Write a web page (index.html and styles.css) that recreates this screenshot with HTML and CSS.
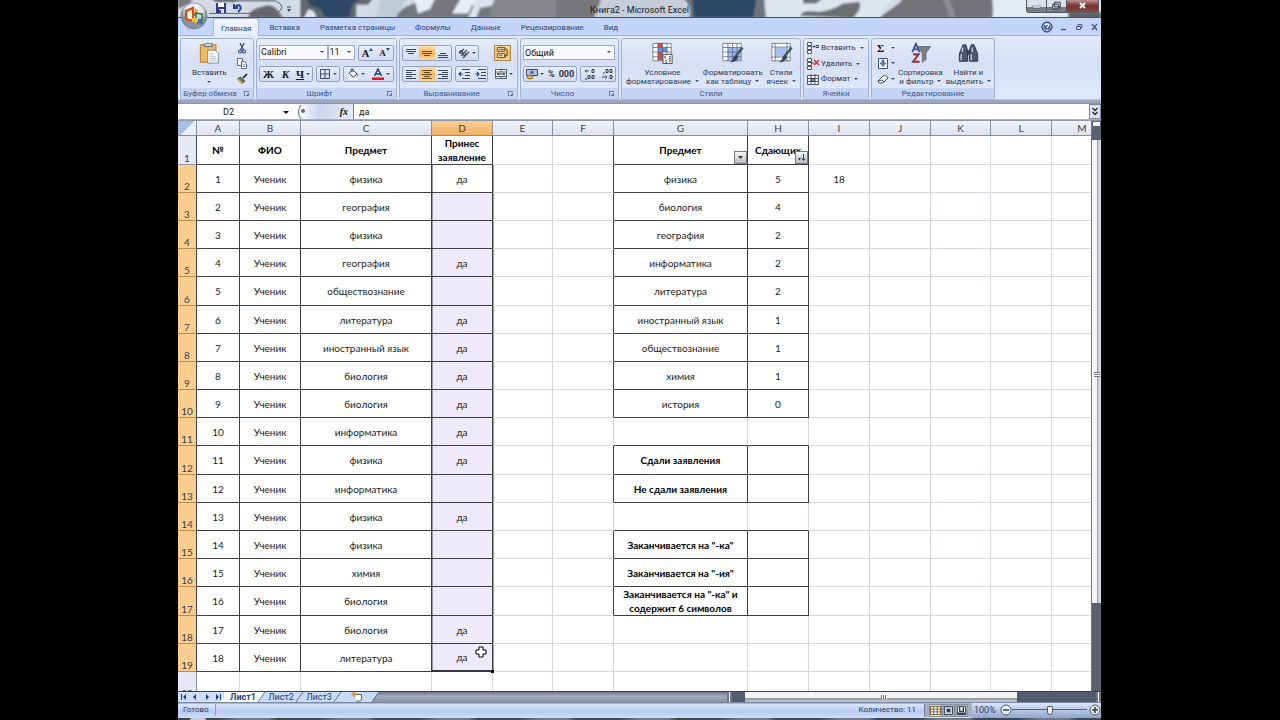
FILE: index.html
```html
<!DOCTYPE html>
<html lang="ru">
<head>
<meta charset="utf-8">
<title>Книга2 - Microsoft Excel</title>
<link rel="stylesheet" href="styles.css">
</head>
<body>
<div class="window">
  <header class="titlebar">
    <svg class="glass" viewBox="0 0 923 19" preserveAspectRatio="none" aria-hidden="true">
      <defs><filter id="soft" x="-5%" y="-30%" width="110%" height="160%"><feGaussianBlur stdDeviation="1.3"/></filter></defs>
      <rect width="923" height="19" fill="#d3dae5"/>
      <g filter="url(#soft)">
        <path d="M0-4h16l-4 8-12 6zM28-4h36l-8 6H40z" fill="#777a80"/>
        <path d="M70 20q2-10 13-12 10-5 17 4l5 8z" fill="#67686a"/>
        <path d="M120-4h22v24h-22z" fill="#dee6f4"/>
        <path d="M122-4h74l-6 9h-12v15h-40q0-9-8-9l-4 9h-4z" fill="#62676d"/>
        <path d="M127-4h58l-10 8-4 16h-24q-2-12-14-13z" fill="#2d4765"/>
        <path d="M203-4h26l-10 24h-22z" fill="#c0cbda"/>
        <path d="M218 20q3-10 14-14l18-10h230v24z" fill="#76777b"/>
        <path d="M236-4h22l-6 14-12 5zM284-4h28l-5 9-13 1-4 9h-16z" fill="#e8ecf4"/>
        <path d="M300-4h28l-12 10-14 3-4 11h-8z" fill="#dce2ed"/>
        <path d="M318-4h60v24h-66q0-12 6-24z" fill="#85878b"/>
        <path d="M416 20l8-24h82l4 24z" fill="#c7ceda"/>
        <path d="M504-4h86v24h-79q4-12-7-24z" fill="#6d737b"/>
        <path d="M514-4h65l-4 24h-59z" fill="#2d4765"/>
        <path d="M586-4h130l-16 24H588z" fill="#dfe5ef"/>
        <path d="M625-4h23l-10 8h-13zM622 18q2-8 19-5 13-1 24-9l16-2q4 7-6 18z" fill="#6c6e72"/>
        <path d="M701 20l20-16 6-8h86q4 12 1 24z" fill="#717377"/>
        <path d="M767-4l8 24" stroke="#8c8e92" stroke-width="6"/>
        <path d="M815-4h108v24H815z" fill="#e5ebf5"/>
        <path d="M890 13h33v8h-33z" fill="#5f6166"/>
      </g>
      <path d="M36 1h62q12 7 0 14H31" fill="none" stroke="#55606e"/>
    </svg>
    <div class="quick">
      <button aria-label="Сохранить"><svg viewBox="0 0 10 10"><path d="M0 0h10v10H0z" fill="#343a86"/><path d="M2 0h6v4H2z" fill="#fff"/><path d="M3 6h5v4H3z" fill="#dfe3f4"/><path d="M3 7h2v3H3z" fill="#343a86"/></svg></button>
      <button aria-label="Отменить"><svg viewBox="0 0 10 10"><path d="M2 1v4h4M2 5q4-4 6-2 2 3-2 6" fill="none" stroke="#26409c" stroke-width="2"/></svg></button>
      <button aria-label="Настройка панели" class="more"><svg viewBox="0 0 10 10"><path d="M3 4h4" stroke="#3b4b66"/><path d="M3 6h4L5 9z" fill="#3b4b66"/></svg></button>
    </div>
    <h1>Книга2 - Microsoft Excel</h1>
    <div class="winbtns">
      <button aria-label="Свернуть"><svg viewBox="0 0 20 12"><path d="M6 6h8v2H6z" fill="#fff" stroke="#4a4e55" stroke-width=".6"/></svg></button>
      <button aria-label="Развернуть"><svg viewBox="0 0 20 12"><path d="M8 2h6v5H8zM6 4h6v5H6z" fill="#d4d8de" stroke="#33373d"/></svg></button>
      <button aria-label="Закрыть" class="close"><svg viewBox="0 0 30 12"><path d="M12.500 3l5 5m0-5l-5 5" stroke="#fff" stroke-width="1.800"/></svg></button>
    </div>
    <button class="office" aria-label="Кнопка Office"><svg viewBox="0 0 28 28"><defs><radialGradient id="orb" cy=".25"><stop offset="0" stop-color="#fff"/><stop offset=".7" stop-color="#dde1ea"/><stop offset="1" stop-color="#8991a2"/></radialGradient></defs><circle cx="14" cy="14" r="13" fill="url(#orb)" stroke="#737c8c" stroke-width=".7"/><path d="M6 9l7-3v13l-7-2z" fill="#fff4df" stroke="#d94b14" stroke-width="2.200"/><path d="M14.500 6.500l3 1v4h-3z" fill="#e9962c"/><path d="M14 11h6v3h-6z" fill="#5a8e37"/><path d="M16 11l6 1v9l-6-1z" fill="#bcd6f0" stroke="#3f7840" stroke-width="1.600"/><path d="M12 16h5v5l-5-1z" fill="#edc13c"/><path d="M18 17h4v4h-4z" fill="#3b71b8"/></svg></button>
  </header>

  <nav class="tabs">
    <button class="tab on">Главная</button>
    <button class="tab">Вставка</button>
    <button class="tab">Разметка страницы</button>
    <button class="tab">Формулы</button>
    <button class="tab">Данные</button>
    <button class="tab">Рецензирование</button>
    <button class="tab">Вид</button>
    <div class="docbtns">
      <button aria-label="Справка"><svg viewBox="0 0 12 12"><circle cx="6" cy="6" r="5" fill="#3f5c9b" stroke="#243b70"/><circle cx="6" cy="6" r="3.800" fill="none" stroke="#dfe8f8" stroke-width=".7"/><path d="M4.300 4.800q.2-1.600 1.800-1.600t1.600 1.400q0 .8-1.600 1.700v.8M6 8v1.200" fill="none" stroke="#fff" stroke-width="1.200"/></svg></button>
      <button aria-label="Свернуть книгу"><svg viewBox="0 0 12 12"><path d="M4 8.500h5" stroke="#46587a" stroke-width="1.400"/></svg></button>
      <button aria-label="Восстановить книгу"><svg viewBox="0 0 12 12"><path d="M3.500 5.500h4v3h-4zM5 5V3.500h4v3H8" fill="none" stroke="#46587a"/></svg></button>
      <button aria-label="Закрыть книгу"><svg viewBox="0 0 12 12"><path d="M3 3l5 6m0-6L3 9" stroke="#46587a" stroke-width="1.300"/></svg></button>
    </div>
  </nav>

  <div class="ribbon">
    <section class="group g-clip">
      <div class="body">
        <button class="big dd">
          <svg viewBox="0 0 24 24"><path d="M2 3h17v19H2z" fill="#efb960" stroke="#a97523"/><path d="M6 4V2h3q1-2 3 0h3v3H6z" fill="#d6d9e0" stroke="#5d6473"/><path d="M10 9h8l4 4v10H10z" fill="#fff" stroke="#7583a3"/><path d="M12 13h5m-5 2.500h8m-8 2.500h8m-8 2.500h8" stroke="#a9b4cc"/></svg>
          <span>Вставить</span></button>
        <div class="stack">
          <button aria-label="Вырезать"><svg viewBox="0 0 12 12"><path d="M4 1l3.500 7M8 1L4.500 8" stroke="#3d4a66" stroke-width="1.300"/><circle cx="4" cy="9.500" r="1.500" fill="none" stroke="#34508f" stroke-width="1.200"/><circle cx="8" cy="9.500" r="1.500" fill="none" stroke="#34508f" stroke-width="1.200"/></svg></button>
          <button aria-label="Копировать"><svg viewBox="0 0 12 12"><path d="M1.500 1.500h5v7h-5z" fill="#fff" stroke="#5b6c92"/><path d="M5.500 4.500h3l2 2v5h-5z" fill="#fff" stroke="#5b6c92"/><path d="M7 7.500h2M7 9.500h2" stroke="#7d93c4"/></svg></button>
          <button aria-label="Формат по образцу"><svg viewBox="0 0 12 12"><path d="M11 1L7 5" stroke="#3d3d3d" stroke-width="2"/><path d="M2 5l3-1 4 4-2 2z" fill="#6a7867" stroke="#3d4438" stroke-width=".6"/><path d="M1 6l5 5 1-1-5-5z" fill="#e7c468" stroke="#876c25" stroke-width=".6"/></svg></button>
        </div>
      </div>
      <h2>Буфер обмена</h2><i class="launch"></i>
    </section>

    <section class="group g-font">
      <div class="body rows">
        <div class="row">
          <div class="combo name"><select aria-label="Шрифт"><option>Calibri</option></select></div>
          <div class="combo size"><select aria-label="Размер шрифта"><option>11</option></select></div>
          <div class="set grow"><button class="serif" aria-label="Увеличить размер">A<svg class="mark" viewBox="0 0 4 4"><path d="M0 3l2-3 2 3z" fill="#27499b"/></svg></button><button class="serif small" aria-label="Уменьшить размер">A<svg class="mark" viewBox="0 0 4 4"><path d="M0 0l2 3 2-3z" fill="#27499b"/></svg></button></div>
        </div>
        <div class="row">
          <div class="set"><button class="serif">Ж</button><button class="serif"><em>К</em></button><button class="serif dd"><u>Ч</u></button></div>
          <div class="set"><button class="dd" aria-label="Границы"><svg viewBox="0 0 12 12"><path d="M1.500 1.500h9v9h-9zM6 1.500v9M1.500 6h9" fill="none" stroke="#434e64"/></svg></button></div>
          <div class="set grow"><button class="dd" aria-label="Цвет заливки"><svg viewBox="0 0 12 12"><path d="M2 5l4-3 4 4-4 3z" fill="#f5f7fb" stroke="#4b5772"/><path d="M4 4V1h2v3" fill="none" stroke="#4b5772"/><path d="M10 5q2 2 .5 4z" fill="#39589a"/><path d="M1 10h10v2H1z" fill="#fff"/></svg></button><button class="dd" aria-label="Цвет текста"><svg viewBox="0 0 12 12"><path d="M2.500 8L6 1l3.500 7M4 6h4" fill="none" stroke="#293e7d" stroke-width="1.500"/><path d="M0 9.500h12V12H0z" fill="#e3161b"/></svg></button></div>
        </div>
      </div>
      <h2>Шрифт</h2><i class="launch"></i>
    </section>

    <section class="group g-align">
      <div class="body rows">
        <div class="row">
          <div class="set three"><button aria-label="По верхнему краю"><svg viewBox="0 0 12 12"><path d="M1 2.500h10M1 4.500h10M3 6.500h6" stroke="#3d485d"/></svg></button><button class="hot" aria-label="По середине"><svg viewBox="0 0 12 12"><path d="M1 4.500h10M1 6.500h10M3 8.500h6" stroke="#6b4a1b"/></svg></button><button aria-label="По нижнему краю"><svg viewBox="0 0 12 12"><path d="M3 6.500h6M1 8.500h10M1 10.500h10" stroke="#3d485d"/></svg></button></div>
          <div class="set two"><button class="dd" aria-label="Ориентация"><svg viewBox="0 0 12 12"><path d="M1 6l5-4M3 9l6-6M5 11l6-6" stroke="#3d485d" stroke-width="1.200"/><circle cx="3" cy="5" r="1.500" fill="none" stroke="#3d485d"/><circle cx="6" cy="7" r="1.500" fill="none" stroke="#3d485d"/></svg></button></div>
          <button class="hot wrapbtn" aria-label="Перенос текста"><svg viewBox="0 0 14 14"><path d="M1.500 1.500h8v4h-8zM1.500 8.500h8v4h-8z" fill="#fff3d8" stroke="#5f4b2c"/><path d="M3 3.500h9v7h-3m1.500-1.500L9 10.500 10.500 12M3 10.500h4" fill="none" stroke="#5f4b2c"/></svg></button>
        </div>
        <div class="row">
          <div class="set three"><button aria-label="По левому краю"><svg viewBox="0 0 12 12"><path d="M1 2.500h10M1 4.500h6M1 6.500h10M1 8.500h6M1 10.500h10" stroke="#3d485d"/></svg></button><button class="hot" aria-label="По центру"><svg viewBox="0 0 12 12"><path d="M1 2.500h10M3 4.500h6M1 6.500h10M3 8.500h6M1 10.500h10" stroke="#6b4a1b"/></svg></button><button aria-label="По правому краю"><svg viewBox="0 0 12 12"><path d="M1 2.500h10M5 4.500h6M1 6.500h10M5 8.500h6M1 10.500h10" stroke="#3d485d"/></svg></button></div>
          <div class="set two wide"><button aria-label="Уменьшить отступ"><svg viewBox="0 0 12 12"><path d="M4 1.500h8M7 4.500h5M7 7.500h5M4 10.500h8" stroke="#3d485d"/><path d="M5 6H1m2-2L1 6l2 2" fill="none" stroke="#27499b" stroke-width="1.200"/></svg></button><button aria-label="Увеличить отступ"><svg viewBox="0 0 12 12"><path d="M4 1.500h8M7 4.500h5M7 7.500h5M4 10.500h8" stroke="#3d485d"/><path d="M1 6h4M3 4l2 2-2 2" fill="none" stroke="#27499b" stroke-width="1.200"/></svg></button></div>
          <button class="dd merge" aria-label="Объединить"><svg viewBox="0 0 12 12"><path d="M.5 1.500h11v9H.5zM.5 4h11m-11 4.500h11M6 1.500V4m0 4.500v2" fill="#fff" stroke="#4d5c7d"/><path d="M2 6h8M3 5v2M9 5v2" stroke="#222"/></svg></button>
        </div>
      </div>
      <h2>Выравнивание</h2><i class="launch"></i>
    </section>

    <section class="group g-num">
      <div class="body rows">
        <div class="row"><div class="combo wide"><select aria-label="Числовой формат"><option>Общий</option></select></div></div>
        <div class="row">
          <div class="set"><button class="dd" aria-label="Финансовый формат"><svg viewBox="0 0 12 12"><path d="M.5 1.500h11v6H.5z" fill="#b7c5e2" stroke="#34466f"/><circle cx="6" cy="4.500" r="1.800" fill="#526a9f"/><ellipse cx="4" cy="9" rx="3" ry="2" fill="#e2b54c" stroke="#6f5316" stroke-width=".7"/></svg></button><button class="bold">%</button><button class="bold">000</button></div>
          <div class="set grow"><button class="dec" aria-label="Увеличить разрядность"><svg viewBox="0 0 12 12"><path d="M1 3h4M2.500 1.500L1 3l1.500 1.500" fill="none" stroke="#27499b"/><path d="M8 1.500h2v3H8zM4 7.500h2v3H4zM8 7.500h2v3H8zM2 10v2" fill="none" stroke="#30394a"/></svg></button><button class="dec" aria-label="Уменьшить разрядность"><svg viewBox="0 0 12 12"><path d="M5 1.500h2v3H5zM9 1.500h2v3H9zM9 7.500h2v3H9zM3 4v2" fill="none" stroke="#30394a"/><path d="M1 9h5M4.500 7.500L6 9l-1.500 1.500" fill="none" stroke="#27499b"/></svg></button></div>
        </div>
      </div>
      <h2>Число</h2><i class="launch"></i>
    </section>

    <section class="group g-style">
      <div class="body">
        <button class="big"><svg viewBox="0 0 24 24"><path d="M1.500 1.500h20v19h-20z" fill="#fff"/><path d="M7 1h5v5H7zM7 11h5v9H7z" fill="#e5463a"/><path d="M7 6h10v5H7z" fill="#5d8de6"/><path d="M1.500 1.500h20v19h-20zM1.500 6h20m-20 5h20m-20 5h20M7 1v20M12 1v20M17 1v20" fill="none" stroke="#55617c" stroke-width=".8"/><path d="M12.500 13.500h10v10h-10z" fill="#fff" stroke="#444"/><path d="M16 15l-2 1.500 2 1.500m3-2h2m-2 2h2m-6 2h2m2-1l2 1.500-2 1.500m-4 0h2" fill="none" stroke="#333"/></svg><span>Условное<br>форматирование <b></b></span></button>
        <button class="big"><svg viewBox="0 0 24 24"><path d="M1.500 1.500h20v19h-20z" fill="#fff"/><path d="M7 6h14v14H7z" fill="#9ab9ee"/><path d="M1.500 1.500h20v19h-20zM1.500 6h20m-20 5h20m-20 5h20M7 1v20M12 1v20M17 1v20" fill="none" stroke="#55617c" stroke-width=".8"/><path d="M23 6l-7 9" stroke="#4f5561" stroke-width="3"/><path d="M16 14l2 2q-1 6-9 6 4-2 4-5 1-3 3-3z" fill="#3c4250"/></svg><span>Форматировать<br>как таблицу <b></b></span></button>
        <button class="big"><svg viewBox="0 0 24 24"><path d="M1.500 1.500h20v19h-20z" fill="#fff"/><path d="M5 6h13v10H5z" fill="#a4c2f3"/><path d="M1.500 1.500h20v19h-20zM1.500 5.500h20m-20 11h20M5 1v20M18 1v20" fill="none" stroke="#55617c" stroke-width=".8"/><path d="M23 6l-7 9" stroke="#4f5561" stroke-width="3"/><path d="M16 14l2 2q-1 6-9 6 4-2 4-5 1-3 3-3z" fill="#3c4250"/></svg><span>Стили<br>ячеек <b></b></span></button>
      </div>
      <h2>Стили</h2>
    </section>

    <section class="group g-cells">
      <div class="body lines">
        <button><svg viewBox="0 0 12 12"><path d="M.5 .5h4v3h-4zM.5 4.500h4v3h-4zM.5 8.500h4v3h-4z" fill="#fff" stroke="#4c5873"/><path d="M6 4.500h2M7 3.500L6 4.500l1 1M9 3.500h3v2H9z" fill="none" stroke="#34436a"/></svg>Вставить <b></b></button>
        <button><svg viewBox="0 0 12 12"><path d="M.5 .5h4v3h-4zM.5 4.500h4v3h-4zM.5 8.500h4v3h-4z" fill="#fff" stroke="#4c5873"/><path d="M4 5h3" stroke="#34436a"/><path d="M7 2l5 5m0-5L7 7" stroke="#d92b2b" stroke-width="1.500"/></svg>Удалить <b></b></button>
        <button><svg viewBox="0 0 12 12"><path d="M.5 2.500h11v9H.5zM.5 5.500h11m-11 3h11M4 1v10.500M8 1v10.500" fill="#fff" stroke="#4c5873"/><path d="M4.500 5.500h3v3h-3z" fill="#7e9cdb" stroke="#333"/></svg>Формат <b></b></button>
      </div>
      <h2>Ячейки</h2>
    </section>

    <section class="group g-edit">
      <div class="body">
        <div class="stack">
          <button class="dd sum" aria-label="Сумма">Σ</button>
          <button class="dd" aria-label="Заполнить"><svg viewBox="0 0 12 12"><path d="M1.500 1.500h9v10h-9z" fill="#fff" stroke="#39508c"/><path d="M5 3h2v3h2L6 9.500 3 6h2z" fill="#5d86d6" stroke="#213d80" stroke-width=".6"/></svg></button>
          <button class="dd" aria-label="Очистить"><svg viewBox="0 0 12 12"><path d="M1 8l5-5q1-1 3 0t2 2L7 9q-1 1-4 1-2 0-2-2z" fill="#fff" stroke="#4b4f59"/><path d="M1 8l4-1 2 2" fill="none" stroke="#4b4f59"/></svg></button>
        </div>
        <button class="big"><svg viewBox="0 0 24 24"><path d="M9 5h14l-5 7v7l-4 3V12z" fill="#7b7f87" stroke="#565a62" stroke-width=".8"/><path d="M3 11L7 2l4 9M4.500 8h5" fill="none" stroke="#3b5591" stroke-width="2"/><path d="M4 13.500h6L4 21.500h7" fill="none" stroke="#8c3741" stroke-width="2.200"/></svg><span>Сортировка<br>и фильтр <b></b></span></button>
        <button class="big"><svg viewBox="0 0 24 24"><path d="M6 3h3l2 6v12H2v-8zM15 3h3l4 10v8h-9V9z" fill="#4c566d" stroke="#293248"/><path d="M10 9h4v5h-4z" fill="#343d52"/><path d="M4 13v7M6 6L5 11M15 13v7m1-14v5" stroke="#c3cada" stroke-width="1.500"/></svg><span>Найти и<br>выделить <b></b></span></button>
      </div>
      <h2>Редактирование</h2>
    </section>
  </div>

  <div class="formula">
    <input class="namebox" aria-label="Имя" value="D2">
    <div class="fx"><svg class="knob" viewBox="0 0 14 14"><path d="M6 0q-5 7 0 14" fill="none" stroke="#5a6375"/><circle cx="8" cy="6" r="2" fill="#5f6570"/></svg><span>fx</span></div>
    <input class="entry" aria-label="Строка формул" value="да">
    <button class="expand" aria-label="Развернуть строку формул"><svg viewBox="0 0 10 14"><path d="M2.500 3L5 5.500 7.500 3m-5 4L5 9.500 7.500 7" fill="none" stroke="#222" stroke-width="1.300"/></svg></button>
  </div>

  <main class="sheetarea">
    <div class="sheet">
      <table>
        <colgroup><col class="w19"><col class="w43"><col class="w61"><col class="w131"><col class="w61"><col class="w60"><col class="w61"><col class="w134"><col class="w61"><col class="w61"><col class="w61"><col class="w60"><col class="w61"><col class="w61"></colgroup>
        <thead><tr><th class="corner"></th><th>A</th><th>B</th><th>C</th><th class="sel">D</th><th>E</th><th>F</th><th>G</th><th>H</th><th>I</th><th>J</th><th>K</th><th>L</th><th>M</th></tr></thead>
        <tbody>
          <tr class="l r head"><th>1</th><td>№</td><td>ФИО</td><td>Предмет</td><td>Принес заявление</td><td></td><td></td><td class="filter">Предмет<button aria-label="Фильтр: Предмет"><svg viewBox="0 0 9 9"><path d="M2 3h5L4.500 6z" fill="#333"/></svg></button></td><td class="filter">Сдающих<button aria-label="Фильтр: Сдающих"><svg viewBox="0 0 9 9"><path d="M1 5h3L2.500 7.500z" fill="#333"/><path d="M6.500 1v6M5 5.500L6.500 7.500 8 5.500" fill="none" stroke="#333"/></svg></button></td><td></td><td></td><td></td><td></td><td></td></tr>
          <tr class="l r s first"><th>2</th><td>1</td><td>Ученик</td><td>физика</td><td>да</td><td></td><td></td><td>физика</td><td>5</td><td>18</td><td></td><td></td><td></td><td></td></tr>
          <tr class="l r s"><th>3</th><td>2</td><td>Ученик</td><td>география</td><td></td><td></td><td></td><td>биология</td><td>4</td><td></td><td></td><td></td><td></td><td></td></tr>
          <tr class="l r s"><th>4</th><td>3</td><td>Ученик</td><td>физика</td><td></td><td></td><td></td><td>география</td><td>2</td><td></td><td></td><td></td><td></td><td></td></tr>
          <tr class="l r s"><th>5</th><td>4</td><td>Ученик</td><td>география</td><td>да</td><td></td><td></td><td>информатика</td><td>2</td><td></td><td></td><td></td><td></td><td></td></tr>
          <tr class="l r s tall"><th>6</th><td>5</td><td>Ученик</td><td>обществознание</td><td></td><td></td><td></td><td>литература</td><td>2</td><td></td><td></td><td></td><td></td><td></td></tr>
          <tr class="l r s"><th>7</th><td>6</td><td>Ученик</td><td>литература</td><td>да</td><td></td><td></td><td>иностранный язык</td><td>1</td><td></td><td></td><td></td><td></td><td></td></tr>
          <tr class="l r s"><th>8</th><td>7</td><td>Ученик</td><td>иностранный язык</td><td>да</td><td></td><td></td><td>обществознание</td><td>1</td><td></td><td></td><td></td><td></td><td></td></tr>
          <tr class="l r s"><th>9</th><td>8</td><td>Ученик</td><td>биология</td><td>да</td><td></td><td></td><td>химия</td><td>1</td><td></td><td></td><td></td><td></td><td></td></tr>
          <tr class="l r s"><th>10</th><td>9</td><td>Ученик</td><td>биология</td><td>да</td><td></td><td></td><td>история</td><td>0</td><td></td><td></td><td></td><td></td><td></td></tr>
          <tr class="l s above"><th>11</th><td>10</td><td>Ученик</td><td>информатика</td><td>да</td><td></td><td></td><td></td><td></td><td></td><td></td><td></td><td></td><td></td></tr>
          <tr class="l r s total tall"><th>12</th><td>11</td><td>Ученик</td><td>физика</td><td>да</td><td></td><td></td><td>Сдали заявления</td><td></td><td></td><td></td><td></td><td></td><td></td></tr>
          <tr class="l r s total"><th>13</th><td>12</td><td>Ученик</td><td>информатика</td><td></td><td></td><td></td><td>Не сдали заявления</td><td></td><td></td><td></td><td></td><td></td><td></td></tr>
          <tr class="l s above"><th>14</th><td>13</td><td>Ученик</td><td>физика</td><td>да</td><td></td><td></td><td></td><td></td><td></td><td></td><td></td><td></td><td></td></tr>
          <tr class="l r s total"><th>15</th><td>14</td><td>Ученик</td><td>физика</td><td></td><td></td><td></td><td>Заканчивается на "-ка"</td><td></td><td></td><td></td><td></td><td></td><td></td></tr>
          <tr class="l r s total"><th>16</th><td>15</td><td>Ученик</td><td>химия</td><td></td><td></td><td></td><td>Заканчивается на "-ия"</td><td></td><td></td><td></td><td></td><td></td><td></td></tr>
          <tr class="l r s total"><th>17</th><td>16</td><td>Ученик</td><td>биология</td><td></td><td></td><td></td><td>Заканчивается на "-ка" и содержит 6 символов</td><td></td><td></td><td></td><td></td><td></td><td></td></tr>
          <tr class="l s"><th>18</th><td>17</td><td>Ученик</td><td>биология</td><td>да</td><td></td><td></td><td></td><td></td><td></td><td></td><td></td><td></td><td></td></tr>
          <tr class="l s last"><th>19</th><td>18</td><td>Ученик</td><td>литература</td><td>да<i class="handle"></i><svg class="cursor" viewBox="0 0 12 12"><path d="M4 1h4v3h3v4H8v3H4V8H1V4h3z" fill="#fff" stroke="#000"/></svg></td><td></td><td></td><td></td><td></td><td></td><td></td><td></td><td></td><td></td></tr>
          <tr><th>20</th><td></td><td></td><td></td><td></td><td></td><td></td><td></td><td></td><td></td><td></td><td></td><td></td><td></td></tr>
        </tbody>
      </table>
    </div>
    <div class="vscroll"><i class="split"></i><i class="gap"></i><i class="thumb"></i><i class="rest"></i></div>
  </main>

  <footer class="sheets">
    <div class="arrows"><button aria-label="Первый лист"><svg viewBox="0 0 8 8"><path d="M6 1v6L3 4z" fill="#1f3c7a"/><path d="M1.500 1v6" stroke="#1f3c7a"/></svg></button><button aria-label="Предыдущий лист"><svg viewBox="0 0 8 8"><path d="M5 1v6L2 4z" fill="#1f3c7a"/></svg></button><button aria-label="Следующий лист"><svg viewBox="0 0 8 8"><path d="M3 1v6l3-3z" fill="#1f3c7a"/></svg></button><button aria-label="Последний лист"><svg viewBox="0 0 8 8"><path d="M2 1v6l3-3z" fill="#1f3c7a"/><path d="M6.500 1v6" stroke="#1f3c7a"/></svg></button></div>
    <button class="stab on">Лист1</button><button class="stab">Лист2</button><button class="stab">Лист3</button>
    <button class="stab new" aria-label="Вставить лист"><svg viewBox="0 0 12 10"><path d="M3.500 2.500h7v5l-2 1.500h-3" fill="#fff" stroke="#4e5f86"/><path d="M3 0v5M.5 2.500h5" stroke="#d18925" stroke-width="1.500"/></svg></button>
    <div class="track"></div>
    <div class="hscroll"><i class="bar"></i><i class="hthumb"></i><i class="bar"></i></div>
  </footer>

  <div class="status">
    <span class="ready">Готово</span>
    <span class="count">Количество: 11</span>
    <div class="views"><button class="hot" aria-label="Обычный"><svg viewBox="0 0 12 10"><path d="M.5 .5h11v9H.5zM.5 3.500h11m-11 3h11M4 .5v9M8 .5v9" fill="#fff" stroke="#6f572b"/></svg></button><button aria-label="Разметка страницы"><svg viewBox="0 0 12 10"><path d="M1.500 .5h9v9h-9z" fill="#cdd3de" stroke="#333a46"/><path d="M4 3h4v4H4z" fill="#333a46"/></svg></button><button aria-label="Страничный"><svg viewBox="0 0 12 10"><path d="M1.500 .5h9v9h-9z" fill="#fff" stroke="#333a46"/><path d="M4 1v5h4V1M1 8h9" fill="none" stroke="#333a46" stroke-width="1.500"/></svg></button></div>
    <div class="zoom"><span>100%</span>
      <button aria-label="Уменьшить"><svg viewBox="0 0 12 12"><circle cx="6" cy="6" r="5" fill="#eef1f6" stroke="#4c5665"/><path d="M3 6h6" stroke="#333c4a" stroke-width="1.500"/></svg></button>
      <input type="range" aria-label="Масштаб" min="10" max="190" value="100">
      <button aria-label="Увеличить"><svg viewBox="0 0 12 12"><circle cx="6" cy="6" r="5" fill="#eef1f6" stroke="#4c5665"/><path d="M3 6h6M6 3v6" stroke="#333c4a" stroke-width="1.500"/></svg></button>
    </div>
  </div>
  <div class="taskbar"><i></i></div>
</div>
</body>
</html>
```
FILE: styles.css
```css
* { box-sizing: border-box; }
body {
  margin: 0;
  padding: 0 179px 0 178px;
  background: #000;
  font: 8px/12px Roboto, "Open Sans", sans-serif;
  color: #2a3a5e;
}
button, input, select { font: inherit; color: inherit; margin: 0; padding: 0; border: 0; background: none; }
button { display: inline-flex; align-items: center; justify-content: center; white-space: nowrap; }
h1, h2 { margin: 0; font: inherit; }
svg { display: block; flex: none; }

.window { height: 100vh; display: flex; flex-direction: column; overflow: hidden; background: #fff; }
.window > * { flex: none; }

/* title bar */
.titlebar { position: relative; height: 18px; display: flex; justify-content: center; border-bottom: 1px solid #3f4f6b; }
.glass { position: absolute; inset: 0; width: 100%; height: 100%; }
.titlebar h1 { position: relative; font-size: 9px; margin-top: 4px; color: #15181d; }
.quick { position: absolute; left: 38px; top: 3px; display: flex; gap: 6px; }
.quick svg { width: 10px; height: 10px; }
.quick .more { margin-left: 36px; }
.winbtns { position: absolute; right: 2px; top: 0; display: flex; border: 1px solid #54575e; border-top: 0; border-radius: 0 0 3px 3px; overflow: hidden; background: linear-gradient(#dde1e8 55%, #777a80 56%); }
.winbtns svg { width: 19px; height: 12px; }
.winbtns button + button { border-left: 1px solid #54575e; }
.winbtns .close { background: linear-gradient(#c09392, #74302e 50%, #8f4a41); }
.winbtns .close svg { width: 31px; }
.office { position: absolute; left: 2px; top: 2px; z-index: 2; }
.office svg { width: 28px; height: 28px; }

/* tabs */
.tabs { height: 18px; display: flex; align-items: stretch; padding-left: 35px; background: #c3d5f8; border-bottom: 1px solid #9fb3da; }
.tab { padding: 3px 10px 0; color: #2f4370; }
.tab.on { background: linear-gradient(#f3f6fd, #e3eafa); border: 1px solid #a6b8dc; border-bottom: 0; border-radius: 3px 3px 0 0; padding: 2px 7px 0; margin-bottom: -1px; }
.docbtns { margin-left: auto; display: flex; gap: 4px; }
.docbtns svg { width: 12px; height: 12px; }

/* ribbon */
.ribbon { height: 67px; padding: 2px 1px 3px 2px; display: flex; gap: 2px; background: linear-gradient(#e2e9f8, #d4e0f6 40%, #dfe9fb 93%, #8e9cb6 97%, #a7b1c4); }
.group { position: relative; display: flex; flex-direction: column; border: 1px solid #9fb0d0; border-radius: 3px; background: linear-gradient(#e6ebf8, #d6def3 40%, #e2eafb); overflow: hidden; }
.group .body { flex: 1; min-height: 0; display: flex; }
.group h2 { height: 11px; line-height: 11px; text-align: center; color: #40588f; background: #c4d5f5; }
.group h2:has(+ .launch) { padding-right: 14px; }
.launch { position: absolute; right: 4px; bottom: 3px; width: 5px; height: 5px; border-left: 1px solid #6378a5; border-top: 1px solid #6378a5; background: linear-gradient(135deg, transparent 55%, #6378a5 56%); }
.g-clip { width: 74px; }
.g-font { width: 141px; }
.g-align { width: 119px; }
.g-num { width: 99px; }
.g-style { width: 180px; }
.g-cells { width: 66px; }
.g-edit { width: 124px; }
.big { display: flex; flex-direction: column; justify-content: flex-start; line-height: 9px; gap: 4px; padding-top: 3px; text-align: center; }
.big svg { width: 23px; height: 22px; }
.big b, .lines b, .dd::after { content: ""; display: inline-block; flex: none; border: 2px solid transparent; border-top-color: #3a4c74; border-bottom: 0; margin-left: 2px; vertical-align: 2px; }
.big.dd::after { margin-left: 0; }
.g-clip .body { padding-left: 11px; gap: 9px; }
.stack { display: flex; flex-direction: column; justify-content: space-around; padding: 1px 0; }
.stack svg { width: 12px; height: 12px; }
.rows { flex-direction: column; justify-content: space-evenly; padding: 0 2px; }
.row { display: flex; gap: 3px; }
.combo { position: relative; height: 15px; border: 1px solid #9aa9c9; background: #f8faff; color: #111; font-size: 9px; }
.combo::after { content: ""; position: absolute; right: 3px; top: 5px; border: 2px solid transparent; border-top-color: #3a4c74; }
.combo select { display: block; width: 100%; height: 13px; padding-left: 1px; appearance: none; }
.combo.name { width: 70px; }
.combo.size { width: 28px; margin-left: -3px; }
.combo.wide { width: 92px; }
.set { display: flex; height: 16px; border: 1px solid #93a3c5; border-radius: 2px; background: linear-gradient(#e6ecf8, #d2dbee); }
.row .set button { padding: 0 2px; }
.set.grow, .set.grow button { flex: 1; }
.set svg, .merge svg { width: 12px; height: 12px; }
.serif { font: bold 11px/12px "Liberation Serif", serif; color: #151a28; min-width: 17px; }
.serif.small { font-size: 9px; }
.set .mark { width: 4px; height: 4px; align-self: flex-start; margin-top: 2px; }
.three button { width: 16px; }
.row .two { width: 24px; }
.row .two.wide { width: 33px; }
.row .two.wide button { flex: 1; }
.hot { background: linear-gradient(#fce0a5, #f5b45b 50%, #fbd993); }
.wrapbtn { width: 17px; height: 16px; border: 1px solid #a58a52; margin-left: 12px; }
.wrapbtn svg { width: 13px; height: 13px; }
.merge { margin-left: 4px; }
.bold { font-size: 9px; font-weight: 700; color: #2b3346; }
.g-style .body { justify-content: space-between; padding: 0 4px; }
.lines { flex-direction: column; align-items: flex-start; justify-content: space-evenly; padding-left: 3px; }
.lines button { gap: 2px; }
.lines svg { width: 12px; height: 12px; }
.g-edit .body { padding: 0 3px 0 5px; justify-content: space-between; }
.sum { font: bold 11px/12px "Liberation Serif", serif; color: #111; justify-content: space-between; }

/* formula bar */
.formula { height: 17px; display: flex; background: #fff; border-top: 1px solid #8995ab; border-bottom: 1px solid #a5afc1; color: #111; font-size: 9px; }
.namebox { width: 101px; text-align: center; }
.fx { position: relative; width: 75px; display: flex; align-items: center; justify-content: space-between; padding: 0 5px 0 16px; border-right: 1px solid #77809a; background: linear-gradient(90deg, #fff 20px, #cdd4ec 40px, #e4e9f6); }
.fx::before { content: ""; position: absolute; left: 4px; top: 7px; border: 3px solid transparent; border-top-color: #111; }
.knob { width: 14px; height: 14px; }
.fx span { font: italic bold 10px/12px "Liberation Serif", serif; }
.entry { flex: 1; min-width: 0; padding-left: 5px; }
.expand { width: 12px; border: 1px solid #7d8aa5; background: #dbe3f3; }
.expand svg { width: 10px; height: 14px; }

/* worksheet */
.window > .sheetarea { flex: 1; min-height: 0; display: flex; border-top: 1px solid #8f98a8; }
.sheet { flex: 1; min-width: 0; overflow: hidden; }
table { width: 935px; table-layout: fixed; border-collapse: separate; border-spacing: 0; font: 10px/14px Lato, "Open Sans", sans-serif; color: #1c1c1c; }
.w19 { width: 19px; } .w43 { width: 43px; } .w60 { width: 60px; } .w61 { width: 61px; } .w131 { width: 131px; } .w134 { width: 134px; }
th, td { padding: 0; text-align: center; border: 0 solid #d5d8df; border-width: 0 1px 1px 0; }
thead th { height: 15px; line-height: 14px; font-weight: 400; color: #3a3f4a; background: linear-gradient(#f1f3fa, #dfe2ee); border-color: #868d9d; }
thead .sel { background: linear-gradient(#f8cf93, #f0b264); }
thead .corner { background: linear-gradient(135deg, #a9bfe4 50%, #e8effa 51%); }
tbody tr { height: 28px; }
tbody tr.tall { height: 29px; }
tbody th { font-weight: 400; line-height: 12px; vertical-align: bottom; background: #e6e8f6; border-color: #8d93a2; color: #3a3f4a; }
.s th { background: #fbcd8f; border-color: #b98d50; border-right-color: #55442c; }
.l td:nth-child(-n+5) { border-color: #3d3f45; }
.l th { border-right-color: #3d3f45; }
.r td:nth-child(8), .r td:nth-child(9), .above td:nth-child(8), .above td:nth-child(9) { border-bottom-color: #3d3f45; }
.r td:nth-child(7), .r td:nth-child(8), .r td:nth-child(9) { border-right-color: #3d3f45; }
.head td, .total td:nth-child(8) { font-weight: 700; color: #000; }
.s td:nth-child(5) { background: #efeafa; box-shadow: inset 1px 0 #9a9aa2, 1px 0 #9a9aa2; }
.first td:nth-child(5) { background: #fff; }
.last td:nth-child(5) { position: relative; border-bottom: 2px solid #34363c; }
.filter { position: relative; white-space: nowrap; }
.filter button { position: absolute; right: 0; bottom: 0; width: 13px; height: 13px; border: 1px solid #777c86; background: linear-gradient(#f5f6f8, #b9bcc4); }
.filter svg { width: 9px; height: 9px; }
.handle { position: absolute; right: -2px; bottom: -3px; width: 3px; height: 3px; background: #000; }
.cursor { position: absolute; right: 5px; top: 2px; width: 12px; height: 12px; }
.vscroll { width: 10px; display: flex; flex-direction: column; background: #59626f; border-left: 1px solid #6b7391; }
.split { height: 4px; margin: 1px 1px 0; background: #eef1f7; }
.gap { height: 14px; background: #59626f; }
.thumb { flex: 464; background: linear-gradient(90deg, #f5f5f7 55%, #a2a5ab 60%, #d9dbdf 80%); position: relative; }
.thumb::after { content: ""; position: absolute; left: 2px; top: 50%; width: 6px; height: 5px; background: repeating-linear-gradient(#70747b 0 1px, #fff 1px 2px); }
.rest { flex: 88; }

/* sheet tabs */
.sheets { height: 11px; display: flex; background: linear-gradient(#6b7587, #a4abb8 40%, #8b94a5); border-top: 1px solid #39424f; color: #24427c; font-size: 9px; }
.arrows { width: 46px; display: flex; justify-content: space-around; background: #cfdefa; }
.arrows svg { width: 8px; height: 8px; }
.stab { position: relative; z-index: 0; height: 10px; line-height: 10px; width: 38px; }
.stab::before { content: ""; position: absolute; inset: 0; z-index: -1; background: #c9daf7; border-right: 1px solid #506182; transform: skewX(-35deg); }
.stab > svg { width: 12px; height: 10px; }
.stab.on { font-weight: 700; background: #fff; }
.stab.on::before { background: #fff; }
.track { flex: 1; }
.hscroll { width: 374px; display: flex; background: #525c6b; }
.bar { width: 5px; background: #fff; border: 1px solid #6d7686; border-width: 0 2px; }
.hthumb { position: relative; flex: 1; margin: 0 79px 0 13px; background: linear-gradient(#f3f4f6 55%, #8d9199 60%, #c9ccd2); }
.hthumb::after { content: ""; position: absolute; left: 50%; top: 3px; width: 6px; height: 4px; background: repeating-linear-gradient(90deg, #70747b 0 1px, #fff 1px 2px); }

/* status bar */
.status { height: 16px; display: flex; align-items: center; background: linear-gradient(#7b89a5 1px, #dbe6fb 2px, #b8cbf0 60%, #d0defa); }
.ready { padding: 0 6px 0 5px; border-right: 1px solid #8e9dbd; }
.count { margin-left: auto; padding-right: 8px; }
.views { display: flex; padding: 0 4px; border-left: 1px solid #6f7e9a; background: #a4afc2; }
.views button { width: 13px; height: 13px; border: 1px solid #8791a4; }
.views svg { width: 11px; height: 9px; }
.zoom { width: 129px; height: 15px; display: flex; align-items: center; background: linear-gradient(#dbe6fb, #8fa5cf); }
.zoom span { width: 26px; padding-left: 2px; margin-right: 2px; font-size: 9px; }
.zoom svg { width: 12px; height: 12px; }
.zoom input { flex: 1; min-width: 0; height: 12px; margin-right: 2px; appearance: none; background: linear-gradient(transparent 5px, #4b5e83 5px 6px, transparent 6px); }
.zoom input::-webkit-slider-thumb { appearance: none; width: 6px; height: 9px; background: #f2f4f8; border: 1px solid #4c5665; border-radius: 1px 1px 3px 3px; }
.taskbar { height: 2px; padding-left: 12px; background: repeating-linear-gradient(90deg, #3e4754 0 40px, #707a88 60px 90px, #39414d 100px); }
.taskbar i { display: block; width: 16px; height: 2px; background: #c7ced8; border-radius: 8px 8px 0 0; }
```
